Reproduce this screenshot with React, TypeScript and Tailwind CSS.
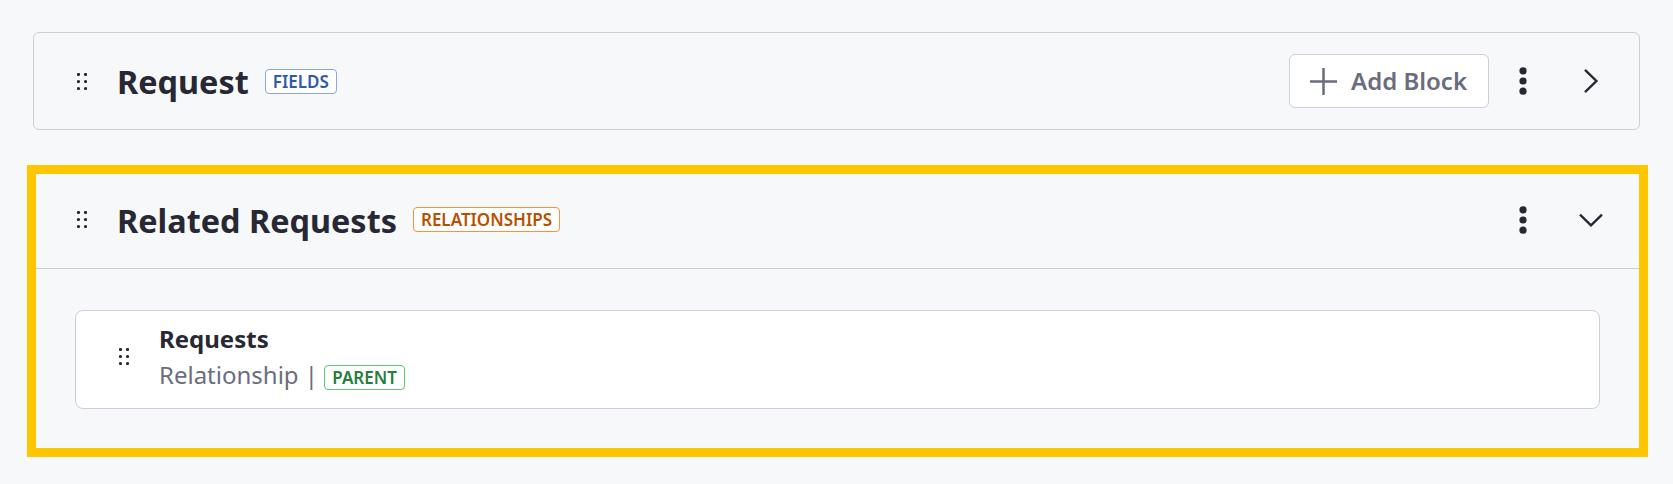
import React from "react";

function Handle() {
  return (
    <svg width="10" height="17" viewBox="0 0 10 17" className="shrink-0">
      {[1.5, 8.5].map((x) =>
        [1.5, 8.5, 15.5].map((y) => (
          <circle key={`${x}-${y}`} cx={x} cy={y} r="1.6" fill="#272833" />
        ))
      )}
    </svg>
  );
}

function Kebab() {
  return (
    <svg width="8" height="28" viewBox="0 0 8 28" className="shrink-0">
      <circle cx="4" cy="3.8" r="3.6" fill="#272833" />
      <circle cx="4" cy="14" r="3.6" fill="#272833" />
      <circle cx="4" cy="24.2" r="3.6" fill="#272833" />
    </svg>
  );
}

function ChevronRight() {
  return (
    <svg width="32" height="32" viewBox="0 0 32 32" className="shrink-0">
      <polyline
        points="10,4.8 21.4,16 10,27.2"
        fill="none"
        stroke="#272833"
        strokeWidth="2.4"
      />
    </svg>
  );
}

function ChevronDown() {
  return (
    <svg width="32" height="32" viewBox="0 0 32 32" className="shrink-0">
      <polyline
        points="5,10.6 16,21.4 27,10.6"
        fill="none"
        stroke="#272833"
        strokeWidth="2.4"
      />
    </svg>
  );
}

function Plus() {
  return (
    <svg width="27" height="27" viewBox="0 0 27 27" className="shrink-0">
      <path d="M13.5 0V27M0 13.5H27" stroke="#6b6c7e" strokeWidth="2.5" />
    </svg>
  );
}

export default function App() {
  return (
    <div className="h-[484px] w-full bg-[#f7f8f9] pt-[32px] font-['Noto_Sans',sans-serif] text-[#272833]">
      {/* Card 1 */}
      <div className="mx-[33px] flex h-[98px] items-center rounded-[6px] border border-[#cdced9] pl-[43px] pr-[32px]">
        <Handle />
        <span className="ml-[30px] text-[32.4px] font-bold leading-[40px]">Request</span>
        <span className="ml-[16px] rounded-[4px] border border-[#89a7e0] bg-white px-[7px] text-[17px] font-semibold uppercase leading-[23px] text-[#2e5aac]">
          Fields
        </span>
        <button className="ml-auto flex h-[54px] items-center gap-[14px] rounded-[6px] border border-[#cdced9] bg-white pl-[20px] pr-[21px] text-[24px] font-semibold text-[#6b6c7e]">
          <Plus />
          <span>Add Block</span>
        </button>
        <div className="ml-[30px]">
          <Kebab />
        </div>
        <div className="ml-[48px]">
          <ChevronRight />
        </div>
      </div>

      {/* Card 2 */}
      <div className="ml-[27px] mr-[25px] mt-[35px] h-[292px] border-[9px] border-[#ffc600]">
        <div className="flex h-[95px] items-center border-b border-[#cdced9] pb-[3px] pl-[41px] pr-[32px]">
          <Handle />
          <span className="ml-[30px] text-[32.4px] font-bold leading-[40px]">Related Requests</span>
          <span className="ml-[16px] rounded-[4px] border border-[#ff8f39] bg-white px-[7px] text-[17px] font-semibold uppercase leading-[23px] text-[#b95000]">
            Relationships
          </span>
          <div className="ml-auto">
            <Kebab />
          </div>
          <div className="ml-[48px]">
            <ChevronDown />
          </div>
        </div>
        <div className="px-[39px] pb-[39px] pt-[41px]">
          <div className="flex h-[99px] items-center rounded-[8px] border border-[#cdced9] bg-white pb-[6px] pl-[43px]">
            <Handle />
            <div className="ml-[30px] flex flex-col">
              <span className="text-[24px] font-bold leading-[36px]">Requests</span>
              <div className="flex items-baseline text-[24px] leading-[36px] text-[#6b6c7e]">
                <span className="whitespace-pre">Relationship | </span>
                <span className="rounded-[4px] border border-[#5aca75] bg-white px-[7px] text-[17px] font-semibold uppercase leading-[23px] text-[#287d3c]">
                  Parent
                </span>
              </div>
            </div>
          </div>
        </div>
      </div>
    </div>
  );
}
